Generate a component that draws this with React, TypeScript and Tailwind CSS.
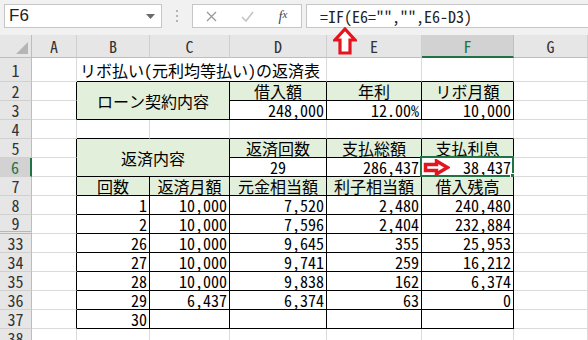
import React from "react";

type Edge = "gg" | "gk" | "kg" | "kk";
type Align = "l" | "c" | "r";

// right / bottom border colour: g = gridline, k = black
const EDGE: Record<Edge, string> = {
  gg: "border-r border-b border-r-[#dadada] border-b-[#dadada]",
  gk: "border-r border-b border-r-[#dadada] border-b-black",
  kg: "border-r border-b border-r-black border-b-[#dadada]",
  kk: "border-r border-b border-black",
};

const ALIGN: Record<Align, string> = {
  l: "justify-start pl-[3px]",
  c: "justify-center",
  r: "justify-end pr-[2px]",
};

interface CellSpec {
  t?: string;
  b: Edge;
  a?: Align;
  fill?: boolean;
  span?: string;
  sel?: boolean;
}

interface RowSpec {
  n: string;
  cells: CellSpec[];
  active?: boolean;
  gapBelow?: boolean;
}

const body: (string | number)[][] = [
  ["8", 1, "10,000", "7,520", "2,480", "240,480"],
  ["9", 2, "10,000", "7,596", "2,404", "232,884"],
  ["33", 26, "10,000", "9,645", "355", "25,953"],
  ["34", 27, "10,000", "9,741", "259", "16,212"],
  ["35", 28, "10,000", "9,838", "162", "6,374"],
  ["36", 29, "6,437", "6,374", "63", "0"],
  ["37", 30, "", "", "", ""],
];

const rows: RowSpec[] = [
  {
    n: "1",
    cells: [
      { b: "gg" },
      { t: "リボ払い(元利均等払い)の返済表", b: "gk", a: "l", span: "col-span-3" },
      { b: "gk" },
      { b: "gk" },
      { b: "gg" },
    ],
  },
  {
    n: "2",
    cells: [
      { b: "kg" },
      { t: "ローン契約内容", b: "kk", a: "c", fill: true, span: "col-span-2 row-span-2" },
      { t: "借入額", b: "kk", a: "c", fill: true },
      { t: "年利", b: "kk", a: "c", fill: true },
      { t: "リボ月額", b: "kk", a: "c", fill: true },
      { b: "gg" },
    ],
  },
  {
    n: "3",
    cells: [
      { b: "kg" },
      { t: "248,000", b: "kk", a: "r" },
      { t: "12.00%", b: "kk", a: "r" },
      { t: "10,000", b: "kk", a: "r" },
      { b: "gg" },
    ],
  },
  {
    n: "4",
    cells: [
      { b: "gg" },
      { b: "gk" },
      { b: "gk" },
      { b: "gk" },
      { b: "gk" },
      { b: "gk" },
      { b: "gg" },
    ],
  },
  {
    n: "5",
    cells: [
      { b: "kg" },
      { t: "返済内容", b: "kk", a: "c", fill: true, span: "col-span-2 row-span-2" },
      { t: "返済回数", b: "kk", a: "c", fill: true },
      { t: "支払総額", b: "kk", a: "c", fill: true },
      { t: "支払利息", b: "kk", a: "c", fill: true },
      { b: "gg" },
    ],
  },
  {
    n: "6",
    active: true,
    cells: [
      { b: "kg" },
      { t: "29", b: "kk", a: "c" },
      { t: "286,437", b: "kk", a: "r" },
      { t: "38,437", b: "kk", a: "r", sel: true },
      { b: "gg" },
    ],
  },
  {
    n: "7",
    cells: [
      { b: "kg" },
      { t: "回数", b: "kk", a: "c", fill: true },
      { t: "返済月額", b: "kk", a: "c", fill: true },
      { t: "元金相当額", b: "kk", a: "c", fill: true },
      { t: "利子相当額", b: "kk", a: "c", fill: true },
      { t: "借入残高", b: "kk", a: "c", fill: true },
      { b: "gg" },
    ],
  },
  ...body.map(([n, ...vals]) => ({
    n: String(n),
    gapBelow: n === "9",
    cells: [
      { b: "kg" as Edge },
      ...vals.map((v) => ({ t: String(v), b: "kk" as Edge, a: "r" as Align })),
      { b: "gg" as Edge },
    ],
  })),
  {
    n: "38",
    cells: [{ b: "gg" }, { b: "gg" }, { b: "gg" }, { b: "gg" }, { b: "gg" }, { b: "gg" }, { b: "gg" }],
  },
];

function Cell({ c }: { c: CellSpec }) {
  return (
    <div
      className={`relative flex items-center whitespace-nowrap leading-[16px] text-[16px] text-black ${EDGE[c.b]} ${
        ALIGN[c.a ?? "l"]
      } ${c.fill ? "bg-[#e2efda]" : "bg-white"} ${c.span ?? ""}`}
    >
      {c.t}
      {c.sel && (
        <>
          <div className="absolute -left-[2px] -top-[2px] -right-[1px] -bottom-[1px] border-2 border-[#217346]" />
          <div className="absolute -right-[4px] -bottom-[4px] h-[7px] w-[7px] border border-white bg-[#217346]" />
          <svg className="absolute left-[1px] top-[1px]" width="27" height="17" viewBox="0 0 27 17">
            <polygon
              points="2.5,5.5 13.5,5.5 13.5,2 24.5,8.5 13.5,15 13.5,11.5 2.5,11.5"
              fill="white"
              stroke="#e3151e"
              strokeWidth="3.5"
              strokeLinejoin="miter"
            />
          </svg>
        </>
      )}
    </div>
  );
}

function RowHeader({ n, active, gapBelow }: { n: string; active?: boolean; gapBelow?: boolean }) {
  return (
    <div
      className={`flex items-center justify-center text-[16px] leading-[16px] ${
        active
          ? "bg-[#d2d2d2] text-[#217346] border-r-2 border-r-[#217346]"
          : "bg-[#e6e6e6] text-[#333] border-r border-r-[#bdbdbd]"
      } ${gapBelow ? "border-b-[3px] border-double border-b-[#b8b8b8]" : "border-b border-b-[#d0d0d0]"}`}
    >
      {n}
    </div>
  );
}

function ColHeader({ l, active }: { l: string; active?: boolean }) {
  return (
    <div
      className={`flex items-center justify-center text-[16px] leading-[16px] ${
        active
          ? "bg-[#d2d2d2] text-[#217346] border-b-2 border-b-[#217346] border-r border-r-[#c0c0c0]"
          : "bg-[#e6e6e6] text-[#333] border-b border-b-[#bdbdbd] border-r border-r-[#cfcfcf]"
      }`}
    >
      {l}
    </div>
  );
}

function FormulaBar() {
  return (
    <div className="flex h-[35px] items-start bg-[#f1f1f1] pt-[4px]">
      <div className="ml-[4px] flex h-[24px] w-[158px] items-center justify-between border border-[#c6c6c6] bg-white pl-[4px] pr-[6px]">
        <span className="font-['Liberation_Sans',sans-serif] text-[17px] text-[#222]">F6</span>
        <svg width="9" height="5" viewBox="0 0 9 5">
          <polygon points="0,0 9,0 4.5,5" fill="#6a6a6a" />
        </svg>
      </div>
      <div className="flex h-[24px] w-[30px] flex-col items-center justify-center gap-[3px]">
        <span className="h-[2px] w-[2px] bg-[#b4b4b4]" />
        <span className="h-[2px] w-[2px] bg-[#b4b4b4]" />
        <span className="h-[2px] w-[2px] bg-[#b4b4b4]" />
      </div>
      <div className="flex h-[24px] w-[110px] items-center border border-[#c6c6c6] bg-white">
        <div className="flex w-[36px] justify-center">
          <svg width="11" height="11" viewBox="0 0 11 11">
            <path d="M1 1 L10 10 M10 1 L1 10" stroke="#9a9a9a" strokeWidth="1.3" />
          </svg>
        </div>
        <div className="flex w-[36px] justify-center">
          <svg width="13" height="11" viewBox="0 0 13 11">
            <path d="M1 6 L5 10 L12 1" stroke="#c4c4c4" strokeWidth="1.6" fill="none" />
          </svg>
        </div>
        <div className="flex w-[36px] justify-center font-['Liberation_Serif',serif] text-[14px] italic text-[#444]">
          f<span className="text-[11px]">x</span>
        </div>
      </div>
      <div className="ml-[4px] flex h-[24px] flex-1 items-center border border-r-0 border-[#c6c6c6] bg-white pl-[13px] text-[16px] text-[#222]">
        =IF(E6="","",E6-D3)
      </div>
    </div>
  );
}

export default function App() {
  return (
    <div className="relative h-[340px] w-[588px] overflow-hidden bg-white font-['Noto_Sans_Mono_CJK_JP','Noto_Sans_CJK_JP',monospace]">
      <FormulaBar />
      <div className="grid grid-cols-[32px_45px_73px_80px_97px_95px_92px_74px] grid-rows-[23px_24px_repeat(14,19px)]">
        <div className="relative bg-[#e6e6e6] border-b border-b-[#bdbdbd] border-r border-r-[#bdbdbd]">
          <svg className="absolute right-[3px] bottom-[3px]" width="12" height="12" viewBox="0 0 12 12">
            <polygon points="12,0 12,12 0,12" fill="#b5b5b5" />
          </svg>
        </div>
        {["A", "B", "C", "D", "E", "F", "G"].map((l) => (
          <ColHeader key={l} l={l} active={l === "F"} />
        ))}
        {rows.map((r) => (
          <React.Fragment key={r.n}>
            <RowHeader n={r.n} active={r.active} gapBelow={r.gapBelow} />
            {r.cells.map((c, i) => (
              <Cell key={i} c={c} />
            ))}
          </React.Fragment>
        ))}
      </div>
      <svg className="absolute left-[333px] top-[27px]" width="24" height="28" viewBox="0 0 24 28">
        <polygon
          points="12,2 22,13 17,13 17,26 7,26 7,13 2,13"
          fill="white"
          stroke="#e3151e"
          strokeWidth="3.2"
          strokeLinejoin="miter"
        />
      </svg>
    </div>
  );
}
